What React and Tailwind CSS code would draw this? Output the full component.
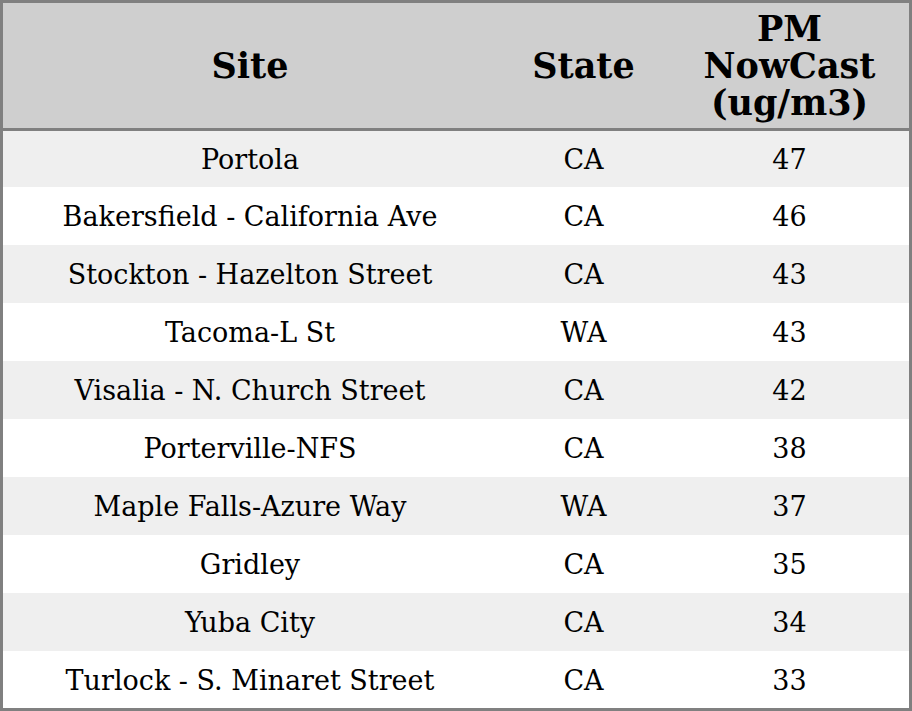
import React from 'react';

const rows = [
    { site: 'Portola', state: 'CA', pm: 47 },
    { site: 'Bakersfield - California Ave', state: 'CA', pm: 46 },
    { site: 'Stockton - Hazelton Street', state: 'CA', pm: 43 },
    { site: 'Tacoma-L St', state: 'WA', pm: 43 },
    { site: 'Visalia - N. Church Street', state: 'CA', pm: 42 },
    { site: 'Porterville-NFS', state: 'CA', pm: 38 },
    { site: 'Maple Falls-Azure Way', state: 'WA', pm: 37 },
    { site: 'Gridley', state: 'CA', pm: 35 },
    { site: 'Yuba City', state: 'CA', pm: 34 },
    { site: 'Turlock - S. Minaret Street', state: 'CA', pm: 33 },
];

const heights = ['h-[56px]', 'h-[58px]', 'h-[58px]', 'h-[58px]', 'h-[58px]', 'h-[58px]', 'h-[58px]', 'h-[58px]', 'h-[58px]', 'h-[57px]'];

const App = () => {
    return (
        <div className="w-[912px] h-[711px] bg-white font-['DejaVu_Serif',serif] text-black border-[3px] border-[#808080]">
            <div className="grid grid-cols-[494px_173px_1fr] h-[128px] bg-[#cfcfcf] border-b-[3px] border-[#808080] text-[35px] font-bold leading-[37px] text-center">
                <div className="flex items-center justify-center">Site</div>
                <div className="flex items-center justify-center">State</div>
                <div className="flex items-center justify-center">
                    <div>PM<br />NowCast<br />(ug/m3)</div>
                </div>
            </div>
            {rows.map((row, i) => (
                <div
                    key={row.site}
                    className={`grid grid-cols-[494px_173px_1fr] items-center pt-[3px] text-center text-[27px] ${heights[i]} ${i % 2 === 0 ? 'bg-[#efefef]' : 'bg-white'}`}
                >
                    <div>{row.site}</div>
                    <div>{row.state}</div>
                    <div>{row.pm}</div>
                </div>
            ))}
        </div>
    );
};

export default App;
